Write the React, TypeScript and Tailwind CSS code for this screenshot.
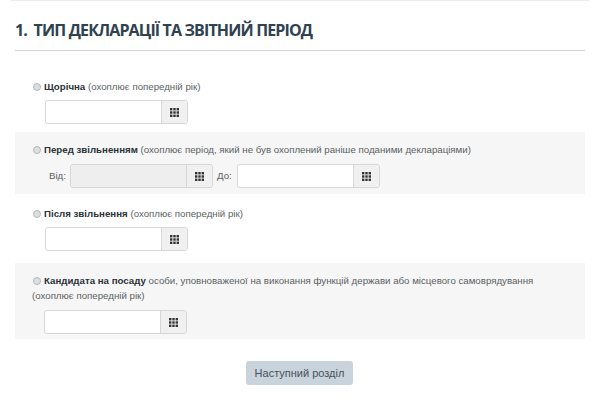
const sans = "font-['Liberation_Sans',Arial,sans-serif]";

function GridIcon() {
  return (
    <svg width="9" height="9" viewBox="0 0 9 9" fill="#333">
      <rect x="0" y="0" width="2.4" height="2.4" />
      <rect x="3.3" y="0" width="2.4" height="2.4" />
      <rect x="6.6" y="0" width="2.4" height="2.4" />
      <rect x="0" y="3.3" width="2.4" height="2.4" />
      <rect x="3.3" y="3.3" width="2.4" height="2.4" />
      <rect x="6.6" y="3.3" width="2.4" height="2.4" />
      <rect x="0" y="6.6" width="2.4" height="2.4" />
      <rect x="3.3" y="6.6" width="2.4" height="2.4" />
      <rect x="6.6" y="6.6" width="2.4" height="2.4" />
    </svg>
  );
}

function DateInput({ disabled }: { disabled?: boolean }) {
  return (
    <div className="flex h-6 w-[143px] rounded-[3px] border border-[#d5d8da]">
      <div
        className={`w-[116px] rounded-l-[3px] border-r border-[#d5d8da] ${
          disabled ? "bg-[#eeeeee]" : "bg-white"
        }`}
      />
      <div className="flex flex-1 items-center justify-center rounded-r-[3px] bg-[#f0f0f0]">
        <GridIcon />
      </div>
    </div>
  );
}

function Radio() {
  return (
    <span className="mr-[3px] inline-block h-2 w-2 rounded-full border border-[#b4b8bb] bg-[#dcdfe1]" />
  );
}

export default function App() {
  return (
    <div className={`${sans} h-[401px] w-[600px] overflow-hidden bg-white text-[9.7px] leading-[14px] text-[#5a5f64]`}>
      <div className="mx-[11px] h-px bg-[#ececec]" />
      <div className="px-[15px]">
        <h1 className="mt-[19px] h-[30px] font-['Open_Sans',sans-serif] text-[16px] leading-[20px] font-bold tracking-[-0.85px] text-[#2f4250]">
          1.&nbsp; ТИП ДЕКЛАРАЦІЇ ТА ЗВІТНИЙ ПЕРІОД
        </h1>
        <div className="h-px bg-[#d0d2d3]" />

        <div className="mt-[29px] pl-[18px]">
          <div className="flex items-center">
            <Radio />
            <span>
              <b className="text-[#2b3238]">Щорічна</b> (охоплює попередній рік)
            </span>
          </div>
          <div className="mt-[6px] ml-[12px]">
            <DateInput />
          </div>
        </div>

        <div className="mt-[8px] h-[62px] bg-[#f6f6f6] pt-[11px] pl-[18px]">
          <div className="flex items-center">
            <Radio />
            <span>
              <b className="text-[#2b3238]">Перед звільненням</b> (охоплює період, який не був охоплений раніше поданими деклараціями)
            </span>
          </div>
          <div className="mt-[7px] flex items-center">
            <span className="w-[37px] pl-[16px]">Від:</span>
            <DateInput disabled />
            <span className="w-[24px] pl-[4px]">До:</span>
            <DateInput />
          </div>
        </div>

        <div className="mt-[13px] pl-[18px]">
          <div className="flex items-center">
            <Radio />
            <span>
              <b className="text-[#2b3238]">Після звільнення</b> (охоплює попередній рік)
            </span>
          </div>
          <div className="mt-[6px] ml-[12px]">
            <DateInput />
          </div>
        </div>

        <div className="mt-[12px] h-[76px] bg-[#f6f6f6] pt-[11px] pl-[17px]">
          <div className="flex items-center pl-px">
            <Radio />
            <span>
              <b className="text-[#2b3238]">Кандидата на посаду</b> особи, уповноваженої на виконання функцій держави або місцевого самоврядування
            </span>
          </div>
          <div className="mt-[1px]">(охоплює попередній рік)</div>
          <div className="mt-[7px] ml-[12px]">
            <DateInput />
          </div>
        </div>

        <div className="mt-[22px] flex justify-center pr-px">
          <button className="h-6 w-[107px] rounded-[3px] bg-[#c9d3db] text-[11px] text-[#46525c]">
            Наступний розділ
          </button>
        </div>
      </div>
    </div>
  );
}
